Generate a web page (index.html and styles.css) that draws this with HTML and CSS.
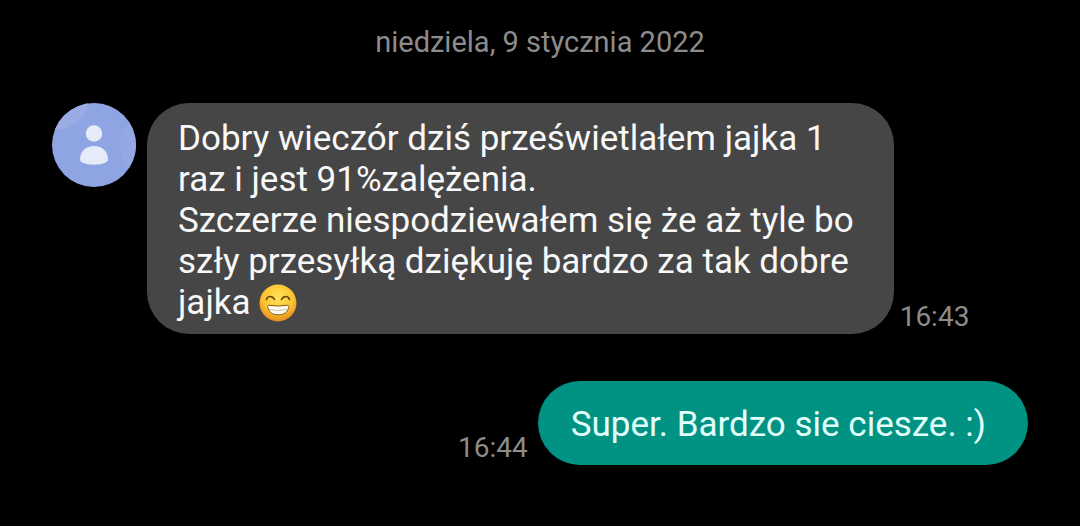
FILE: index.html
```html
<!DOCTYPE html>
<html lang="pl">
<head>
<meta charset="utf-8">
<meta name="viewport" content="width=device-width, initial-scale=1">
<title>Wiadomości</title>
<link rel="stylesheet" href="styles.css">
</head>
<body>
<main class="chat">
  <h1 class="date">niedziela, 9 stycznia 2022</h1>
  <article class="message incoming">
    <svg class="avatar" viewBox="0 0 84 84" role="img" aria-label="Kontakt">
      <defs><clipPath id="disc"><circle cx="42" cy="42" r="42"/></clipPath></defs>
      <g clip-path="url(#disc)">
        <path d="M0 0h84v84H0z" fill="#8fa4e2"/>
        <circle cx="4" cy="-6" r="33" fill="#9aace3"/>
        <circle cx="100" cy="43" r="32" fill="#95a8e3"/>
      </g>
      <circle cx="42" cy="30.500" r="8.300" fill="#e6ebf9"/>
      <path d="M28 57C28 48 34 43 42 43s14 5 14 14c0 2-5 4.700-14 4.700S28 59 28 57z" fill="#e6ebf9"/>
    </svg>
    <p class="bubble">Dobry wieczór dziś prześwietlałem jajka 1<br>raz i jest 91%zalężenia.<br>Szczerze niespodziewałem się że aż tyle bo<br>szły przesyłką dziękuję bardzo za tak dobre<br>jajka <svg class="emoji" viewBox="0 0 38 38" role="img" aria-label="Uśmiech">
        <defs>
          <radialGradient id="face" cx=".5" cy=".36" r=".66">
            <stop offset="0" stop-color="#ffe45c"/>
            <stop offset=".6" stop-color="#fbc52f"/>
            <stop offset="1" stop-color="#e5851c"/>
          </radialGradient>
        </defs>
        <circle cx="19" cy="19" r="18.500" fill="url(#face)"/>
        <path d="M7.500 15.500c1-4 6-4 8 0M22.500 15.500c2-4 7-4 8 0" fill="none" stroke="#6b430b" stroke-width="1.600" stroke-linecap="round"/>
        <path d="M10 21.300q9 1.400 18.500 0c1.300 0 1.500 1 1.200 2C28.500 28.500 25 30.800 19.200 30.800S10 28.500 8.800 23.300c-.3-1 0-2 1.200-2z" fill="#fffdf0" stroke="#8a5a13" stroke-width="1"/>
        <path d="M10 25.500q9 2 18.500 0" fill="none" stroke="#c9bfa6" stroke-width="1"/>
      </svg></p>
    <time class="time" datetime="16:43">16:43</time>
  </article>
  <article class="message outgoing">
    <time class="time" datetime="16:44">16:44</time>
    <p class="bubble">Super. Bardzo sie ciesze. :)</p>
  </article>
</main>
</body>
</html>
```
FILE: styles.css
```css
* { box-sizing: border-box; }
body { margin: 0; background: #000; color: #f8f8f8; font-family: Roboto, sans-serif; }
.chat { padding: 24px 52px; display: flex; flex-direction: column; }
.date { margin: 0 0 43px; text-align: center; font-size: 29px; line-height: 36px; font-weight: 400; color: #8c8c8c; }
.message { display: flex; align-items: flex-end; }
.incoming { margin-bottom: 47px; }
.outgoing { justify-content: flex-end; }
.avatar { width: 84px; height: 84px; flex: none; align-self: flex-start; margin-right: 11px; }
.bubble { margin: 0; padding: 15px 40px 11px 31px; border-radius: 42px; background: #464646; font-size: 35px; line-height: 41px; }
.outgoing .bubble { padding: 23px 42px 20px 33px; background: #009283; color: #e2fffb; }
.emoji { width: 38px; height: 38px; vertical-align: -8px; }
.time { font-size: 28px; line-height: 34px; color: #8c8c8c; margin: 0 10px 0 6px; }
```
